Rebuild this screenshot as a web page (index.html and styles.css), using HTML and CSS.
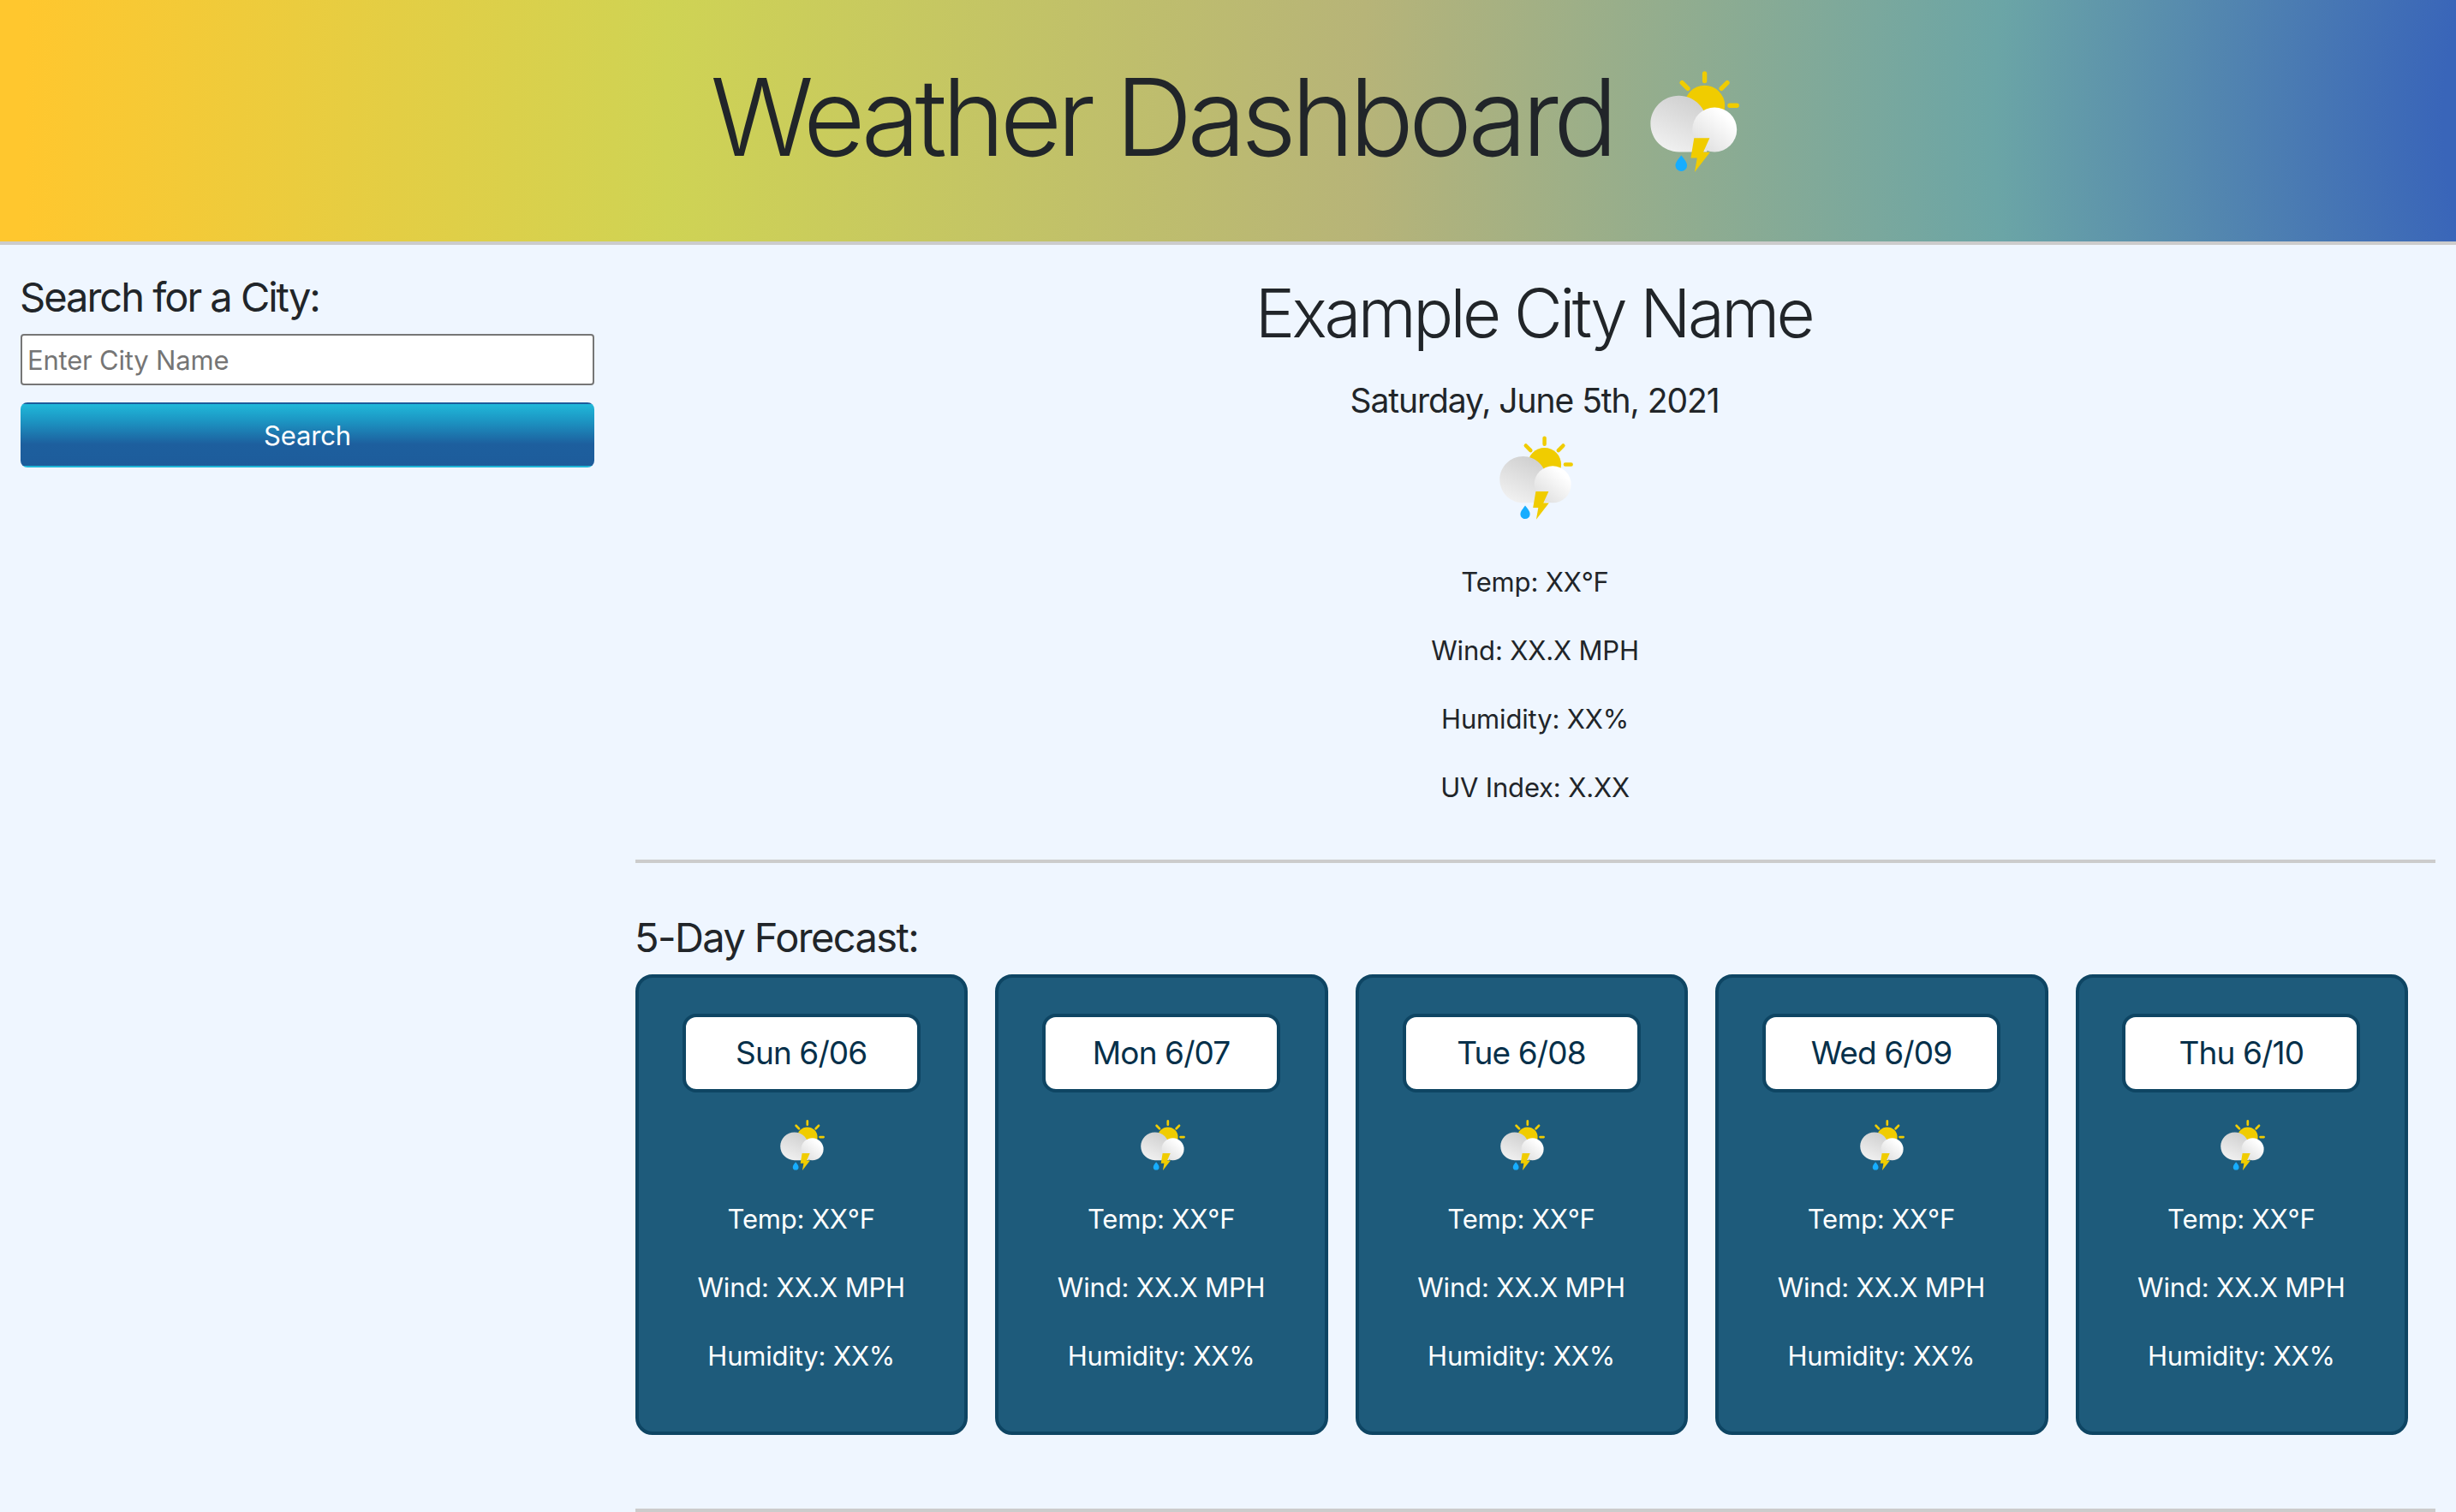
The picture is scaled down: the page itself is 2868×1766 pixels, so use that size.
FILE: index.html
```html
<!DOCTYPE html>
<html lang="en">
<head>
<meta charset="utf-8">
<title>Weather Dashboard</title>
<link rel="stylesheet" href="styles.css">
</head>
<body>
<svg class="defs" width="0" height="0" aria-hidden="true">
  <defs>
    <linearGradient id="cloud-back" x1="0.7" y1="0" x2="0.25" y2="1"><stop offset="0" stop-color="#cfcfcf"/><stop offset="1" stop-color="#f2f2f2"/></linearGradient>
    <linearGradient id="cloud-front" x1="0.75" y1="0.2" x2="0.2" y2="0.85"><stop offset="0" stop-color="#ffffff"/><stop offset="1" stop-color="#e2e2e2"/></linearGradient>
    <symbol id="storm" viewBox="0 0 104 118">
      <g stroke="#f0cc00" stroke-width="5.4" stroke-linecap="round"><path d="M63.6 2.9v8.6M37.2 13.6l6.8 6.8M90 13.6l-6.8 6.8M93 40.2h8.2"/></g>
      <circle cx="63.6" cy="40.4" r="23.6" fill="#f0cc00"/>
      <path d="M33.5 28.8c18.2 0 32.8 14.8 32.8 33v32.6H33.5C15.2 94.4 .4 79.8 .4 61.6S15.3 28.8 33.5 28.8z" fill="url(#cloud-back)"/>
      <circle cx="75.2" cy="68.4" r="26" fill="url(#cloud-front)"/>
      <path d="M51.3 78.2H69.4L62 94.8h7.9L51.9 118l2.9-16.6h-7.4z" fill="#f0cc00"/>
      <path d="M36.3 98.4c3.3 4.3 6.8 7.8 6.8 11.9a6.8 6.8 0 0 1-13.6 0c0-4.1 3.5-7.6 6.8-11.9z" fill="#16adff"/>
    </symbol>
  </defs>
</svg>
<header class="banner">
  <h1 class="title">Weather Dashboard</h1>
  <svg class="icon icon-xl"><use href="#storm"/></svg>
</header>
<main class="layout">
  <aside class="sidebar">
    <h2 class="heading"><span class="t-search">Search for a City:</span></h2>
    <input class="field" type="text" placeholder="Enter City Name">
    <button class="button" type="button">Search</button>
  </aside>
  <div class="content">
    <section class="current">
      <h2 class="city">Example City Name</h2>
      <h3 class="date">Saturday, June 5th, 2021</h3>
      <svg class="icon icon-lg"><use href="#storm"/></svg>
      <p class="stat">Temp: XX°F</p>
      <p class="stat">Wind: XX.X MPH</p>
      <p class="stat">Humidity: XX%</p>
      <p class="stat">UV Index: X.XX</p>
    </section>
    <section class="forecast">
      <h2 class="heading"><span class="t-forecast">5-Day Forecast:</span></h2>
      <div class="cards">
        <article class="card"><h3 class="day">Sun 6/06</h3><svg class="icon icon-sm"><use href="#storm"/></svg><p class="stat">Temp: XX°F</p><p class="stat">Wind: XX.X MPH</p><p class="stat">Humidity: XX%</p></article>
        <article class="card"><h3 class="day">Mon 6/07</h3><svg class="icon icon-sm"><use href="#storm"/></svg><p class="stat">Temp: XX°F</p><p class="stat">Wind: XX.X MPH</p><p class="stat">Humidity: XX%</p></article>
        <article class="card"><h3 class="day">Tue 6/08</h3><svg class="icon icon-sm"><use href="#storm"/></svg><p class="stat">Temp: XX°F</p><p class="stat">Wind: XX.X MPH</p><p class="stat">Humidity: XX%</p></article>
        <article class="card"><h3 class="day">Wed 6/09</h3><svg class="icon icon-sm"><use href="#storm"/></svg><p class="stat">Temp: XX°F</p><p class="stat">Wind: XX.X MPH</p><p class="stat">Humidity: XX%</p></article>
        <article class="card"><h3 class="day">Thu 6/10</h3><svg class="icon icon-sm"><use href="#storm"/></svg><p class="stat">Temp: XX°F</p><p class="stat">Wind: XX.X MPH</p><p class="stat">Humidity: XX%</p></article>
      </div>
    </section>
  </div>
</main>
</body>
</html>
```

FILE: styles.css
```css
* { box-sizing: border-box; }

body {
  margin: 0;
  height: 1766px;
  overflow: hidden;
  background: #eff6ff;
  color: #212529;
  font: 400 31px/48px Inter, sans-serif;
}

h1, h2, h3, p { margin: 0; white-space: nowrap; }

.defs { position: absolute; }
.icon { display: block; flex: none; }

.banner {
  display: flex;
  justify-content: center;
  height: 286px;
  border-bottom: 4px solid #ccc;
  background: radial-gradient(circle at 115% 50%, #3965b9 445px, #6ba5a6 970px, #b7b478 1710px, #cfd354 2520px, #ffc72e 3270px);
}
.title { padding-top: 62px; font-size: 125px; font-weight: 350; line-height: 150px; letter-spacing: -5.9px; }
.icon-xl { width: 104px; height: 118px; margin: 83px 7px 0 44px; }

.layout { display: flex; }

.sidebar {
  display: flex;
  flex-direction: column;
  width: 718px;
  padding: 32px 24px 0;
}
.heading { margin-left: -1px; font-size: 47px; font-weight: 400; line-height: 58px; }
.t-search { letter-spacing: -2px; }
.t-forecast { letter-spacing: -1.6px; }
.field {
  height: 60px;
  margin: 14px 0 20px;
  padding: 2px 6px;
  border: 2px solid #767676;
  border-radius: 4px;
  background: #fff;
  font: inherit;
  letter-spacing: -0.2px;
}
.field::placeholder { color: #757575; opacity: 1; }
.button {
  height: 76px;
  padding: 2px 0 0;
  border: 2px solid transparent;
  border-radius: 8px;
  background: linear-gradient(#20b8d9, #1c94c2 28%, #1d5f9e 65%, #1d5c9b);
  color: #fff;
  font: inherit;
  letter-spacing: -0.15px;
}

.content { flex: 1; padding: 0 24px; }
.current {
  display: flex;
  flex-direction: column;
  align-items: center;
  height: 722px;
  padding-top: 32px;
  border-bottom: 4px solid #ccc;
}
.city { margin-right: 4px; font-size: 78px; font-weight: 360; line-height: 96px; letter-spacing: -3.6px; }
.date { margin: 30px 2px 0 0; font-size: 39px; font-weight: 400; line-height: 48px; letter-spacing: -1.05px; }
.icon-lg { width: 86px; height: 98px; margin: 17px 0 49px 2px; }
.stat { margin-right: 1px; margin-bottom: 32px; letter-spacing: -0.17px; }

.forecast { height: 758px; padding-top: 58px; border-bottom: 4px solid #ccc; }
.cards { display: flex; gap: 32px; margin-top: 14px; padding-right: 32px; }
.card {
  display: flex;
  flex: 1;
  flex-direction: column;
  align-items: center;
  height: 538px;
  padding-top: 42px;
  border: 4px solid #0e4563;
  border-radius: 20px;
  background: #1e5b7b;
  color: #fff;
}
.day {
  width: 278px;
  margin-right: 1px;
  padding: 18px 0;
  border: 4px solid #0e4563;
  border-radius: 16px;
  background: #fff;
  color: #06304a;
  font-size: 37px;
  font-weight: 400;
  line-height: 48px;
  letter-spacing: -0.9px;
  text-align: center;
}
.icon-sm { width: 52px; height: 59px; margin: 32px 0 33px 2px; }
```
